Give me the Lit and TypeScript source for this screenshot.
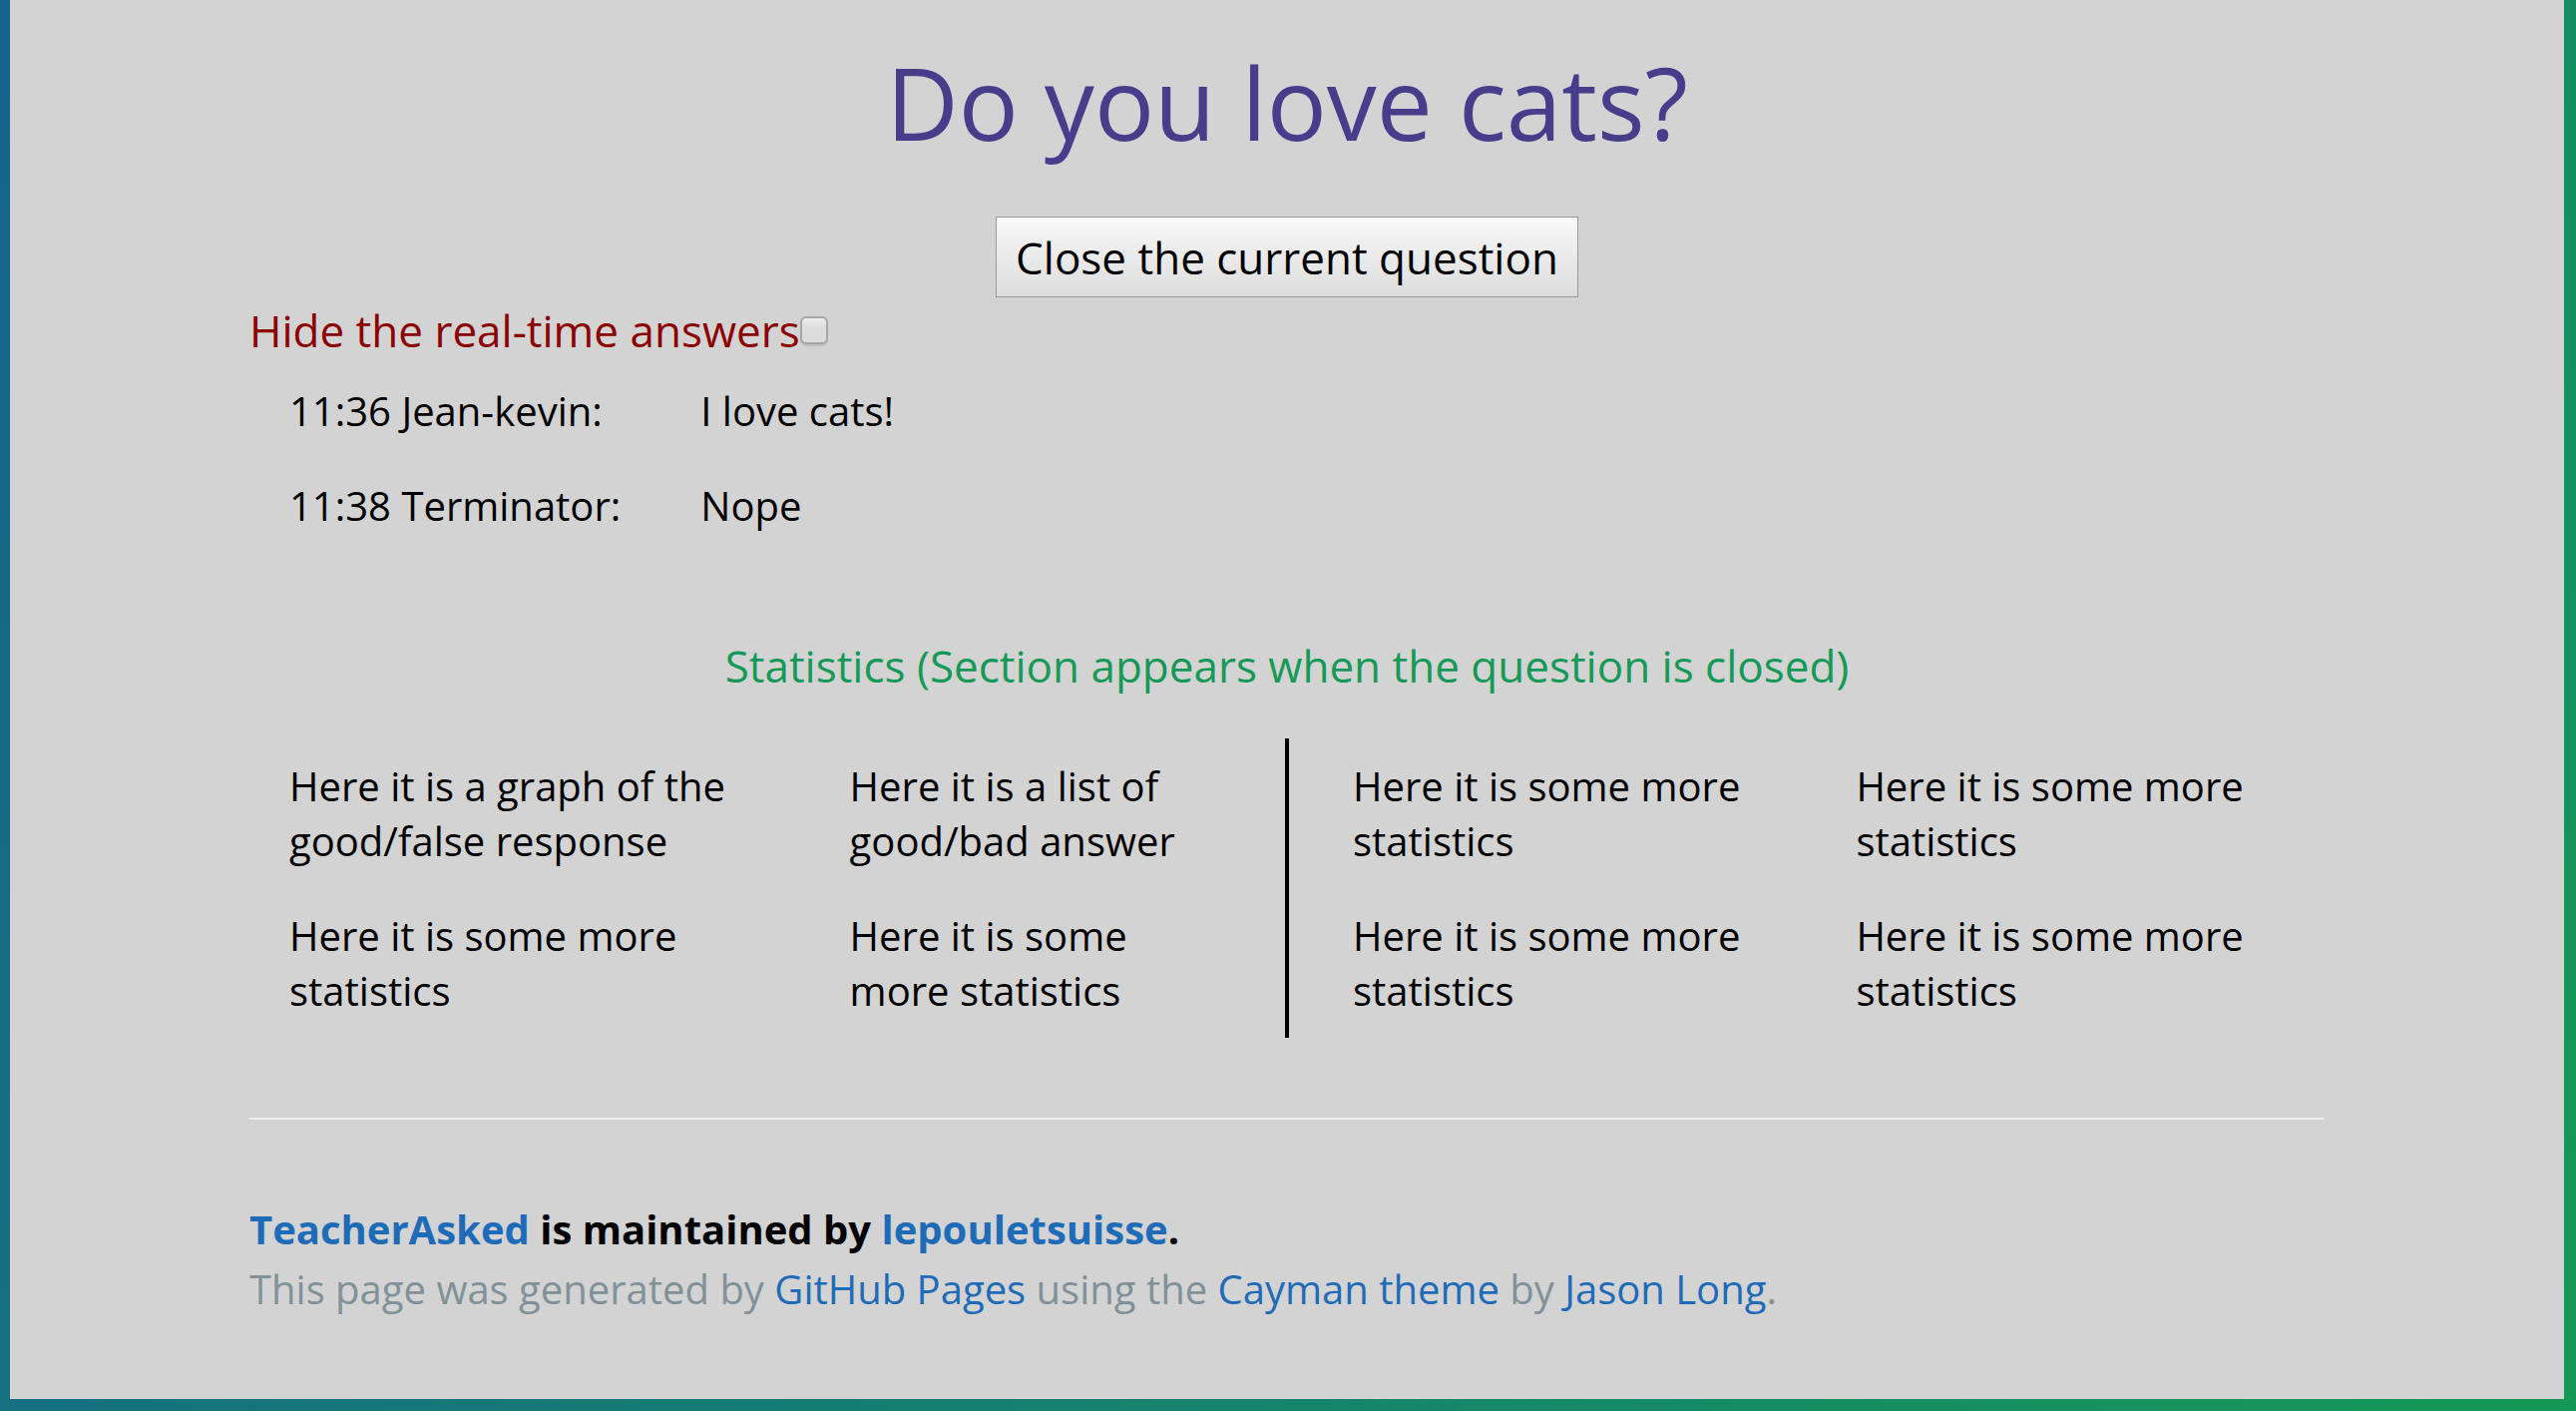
import { LitElement, html, css } from "lit";
import { customElement } from "lit/decorators.js";

@customElement("app-root")
export class AppRoot extends LitElement {
  static styles = css`
    :host {
      display: block;
      font-family: "Open Sans", "Helvetica Neue", Helvetica, Arial, sans-serif;
      font-size: 40px;
      line-height: 60px;
      color: #000;
    }
    * { box-sizing: border-box; }
    .frame {
      min-height: 100vh;
      padding: 0 12px 12px 10px;
      background: linear-gradient(120deg, #155799, #159957) bottom / 100% 200% no-repeat;
    }
    .page {
      min-height: calc(100vh - 12px);
      padding: 27px 240px 80px;
      background: lightgray;
    }
    .question {
      margin: 0;
      font-size: 100px;
      line-height: 150px;
      font-weight: 400;
      text-align: center;
      color: darkslateblue;
    }
    .actions { display: flex; justify-content: center; margin-top: 40px; }
    .close {
      height: 81px;
      padding: 0 19px;
      border: 1px solid #999;
      border-radius: 0;
      background: linear-gradient(#f8f8f8, #dddddd);
      font: inherit;
      font-size: 44px;
      color: #000;
    }
    .hide { display: flex; align-items: center; font-size: 44px; line-height: 66px; color: #8b0000; }
    .hide input {
      appearance: none;
      width: 28px;
      height: 28px;
      margin: 0;
      border: 2px solid #a6a6a6;
      border-radius: 6px;
      background: linear-gradient(#ededed, #dcdcdc 40%);
      box-shadow: 0 2px 1px rgba(0, 0, 0, 0.1);
    }
    .hide input:checked { background: #1e6bb8; }
    table { border-collapse: collapse; }
    td { padding: 20px 40px; line-height: 55px; vertical-align: top; text-align: left; }
    .stats-title { margin: 80px 0 40px; font-size: 44px; line-height: 66px; font-weight: 400; text-align: center; color: #159957; }
    .stats { width: 100%; table-layout: fixed; }
    .stats .graph { width: 27%; }
    .stats .list { width: 23%; }
    .stats .more { width: 25.5%; }
    .stats .divide { padding-right: 60px; border-right: 4px solid #000; }
    .stats .after { padding-left: 64px; }
    footer { margin-top: 80px; padding-top: 80px; border-top: 2px solid #eff0f1; }
    footer p { margin: 0; }
    .owner { font-weight: 700; }
    .credits { color: #819198; }
    a { color: #1e6bb8; text-decoration: none; }
  `;

  private answers = [
    { who: "11:36 Jean-kevin:", text: "I love cats!" },
    { who: "11:38 Terminator:", text: "Nope" },
  ];

  private more = "Here it is some more statistics";

  private stats = [
    ["Here it is a graph of the good/false response", "Here it is a list of good/bad answer", this.more, this.more],
    [this.more, this.more, this.more, this.more],
  ];

  private cellClasses = ["", "divide", "after", ""];

  render() {
    return html`
      <div class="frame">
        <main class="page">
          <h1 class="question">Do you love cats?</h1>
          <div class="actions"><button class="close" type="button">Close the current question</button></div>
          <div class="hide"><label for="hide">Hide the real-time answers</label><input id="hide" type="checkbox" /></div>
          <table class="answers">
            <tbody>${this.answers.map((a) => html`<tr><td>${a.who}</td><td>${a.text}</td></tr>`)}</tbody>
          </table>
          <h2 class="stats-title">Statistics (Section appears when the question is closed)</h2>
          <table class="stats">
            <colgroup><col class="graph" /><col class="list" /><col class="more" /><col /></colgroup>
            <tbody>${this.stats.map((row) => html`<tr>${row.map((s, i) => html`<td class=${this.cellClasses[i]}>${s}</td>`)}</tr>`)}</tbody>
          </table>
          <footer>
            <p class="owner"><a href="#">TeacherAsked</a> is maintained by <a href="#">lepouletsuisse</a>.</p>
            <p class="credits">This page was generated by <a href="#">GitHub Pages</a> using the <a href="#">Cayman theme</a> by <a href="#">Jason Long</a>.</p>
          </footer>
        </main>
      </div>
    `;
  }
}
